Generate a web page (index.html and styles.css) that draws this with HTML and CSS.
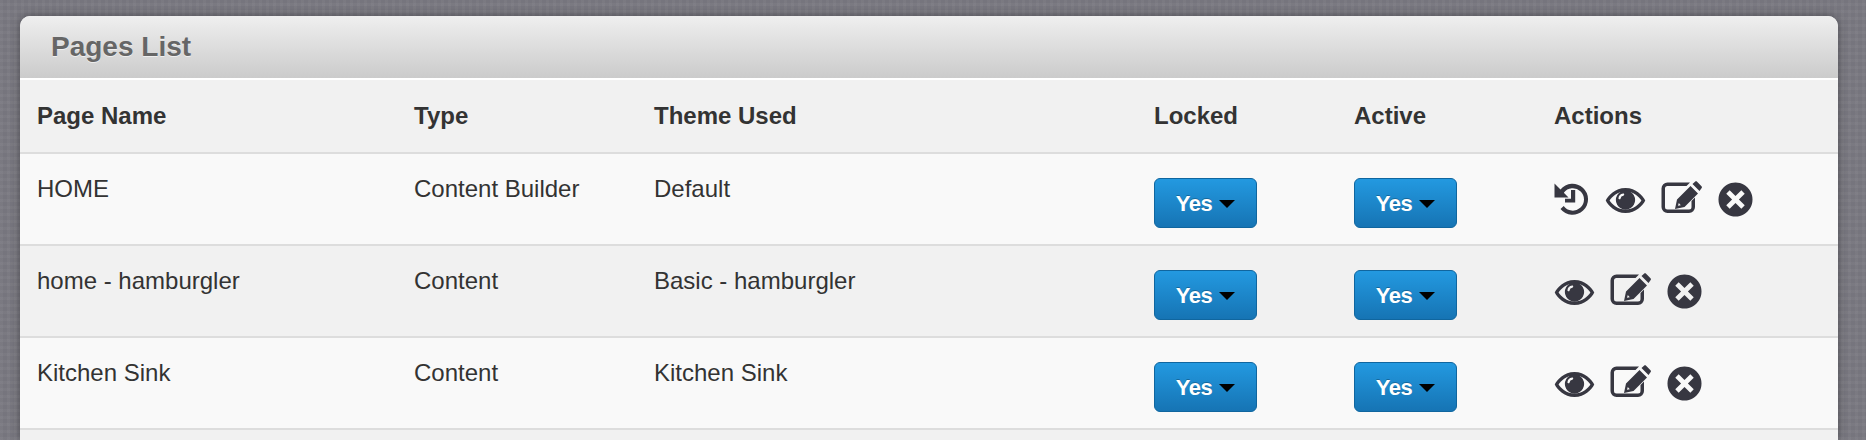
FILE: index.html
```html
<!DOCTYPE html>
<html lang="en">
<head>
  <meta charset="UTF-8">
  <title>Pages List</title>
  <link rel="stylesheet" href="styles.css">
</head>
<body>
  <svg class="icon-defs" width="0" height="0">
    <defs>
      <symbol id="ico-history" viewBox="0 0 36 36">
        <path d="M6.500 8.500A15.500 15.500 0 1 1 6.500 28l3.200-3A11.200 11.200 0 1 0 9.800 11.800L14.500 16.500H.5V2.500z"/>
        <path d="M17 9h4.200v12.500H11v-3.800h6z"/>
      </symbol>
      <symbol id="ico-eye" viewBox="0 0 42 28">
        <path fill-rule="evenodd" d="M21 1C32 1 39 9 41.500 14 39 19 32 27 21 27S3 19 .5 14C3 9 10 1 21 1zM21 4.600C13 4.600 7 10 4.500 14 7 18 13 23.400 21 23.400S35 18 37.500 14C35 10 29 4.600 21 4.600z"/>
        <path fill-rule="evenodd" d="M21 3.500a10 10 0 1 1-.01 0zM18.500 6.800a5.500 5.500 0 0 0-4.800 4.800c0 1.500 2 1.500 2.200.2A3.400 3.400 0 0 1 18.700 9c1.400-.2 1.300-2.300-.2-2.200z"/>
      </symbol>
      <symbol id="ico-edit" viewBox="0 0 42 34">
        <path d="M6.500 1.500H29l-3.500 3.500H6.500A2.500 2.500 0 0 0 4 7.500v18.500A2.500 2.500 0 0 0 6.500 28.500h21.500a2.500 2.500 0 0 0 2.500-2.500V20l3.500-3.500V26A6 6 0 0 1 28 32h-21.500A6 6 0 0 1 .5 26V7.500A6 6 0 0 1 6.500 1.500z"/>
        <path fill-rule="evenodd" d="M16 18.500 29.500 5 37 12.500 23.500 26 14 28zM17.800 22 17 24.800 19.800 24.200z"/>
        <path d="M31.500 3 34 .8c.7-.6 1.500-.6 2.100 0l4.400 4.400c.6.6.6 1.500 0 2.100L38.500 10z"/>
      </symbol>
      <symbol id="ico-close" viewBox="0 0 36 36">
        <path fill-rule="evenodd" d="M18 .5a17.500 17.500 0 1 1-.01 0zM12 8.500 8.500 12 14.500 18 8.500 24 12 27.500 18 21.500 24 27.500 27.500 24 21.500 18 27.500 12 24 8.500 18 14.500z"/>
      </symbol>
    </defs>
  </svg>

  <div class="panel">
    <div class="panel-head">
      <h2>Pages List</h2>
    </div>
    <table class="pages">
      <colgroup>
        <col class="col-name">
        <col class="col-type">
        <col class="col-theme">
        <col class="col-flag">
        <col class="col-flag">
        <col>
      </colgroup>
      <thead>
        <tr>
          <th>Page Name</th>
          <th>Type</th>
          <th>Theme Used</th>
          <th>Locked</th>
          <th>Active</th>
          <th>Actions</th>
        </tr>
      </thead>
      <tbody>
        <tr>
          <td>HOME</td>
          <td>Content Builder</td>
          <td>Default</td>
          <td><button class="btn-yes">Yes<span class="caret"></span></button></td>
          <td><button class="btn-yes">Yes<span class="caret"></span></button></td>
          <td>
            <div class="actions">
              <svg class="ico ico-history"><use href="#ico-history"/></svg>
              <svg class="ico ico-eye"><use href="#ico-eye"/></svg>
              <svg class="ico ico-edit"><use href="#ico-edit"/></svg>
              <svg class="ico ico-close"><use href="#ico-close"/></svg>
            </div>
          </td>
        </tr>
        <tr>
          <td>home - hamburgler</td>
          <td>Content</td>
          <td>Basic - hamburgler</td>
          <td><button class="btn-yes">Yes<span class="caret"></span></button></td>
          <td><button class="btn-yes">Yes<span class="caret"></span></button></td>
          <td>
            <div class="actions">
              <svg class="ico ico-eye"><use href="#ico-eye"/></svg>
              <svg class="ico ico-edit"><use href="#ico-edit"/></svg>
              <svg class="ico ico-close"><use href="#ico-close"/></svg>
            </div>
          </td>
        </tr>
        <tr>
          <td>Kitchen Sink</td>
          <td>Content</td>
          <td>Kitchen Sink</td>
          <td><button class="btn-yes">Yes<span class="caret"></span></button></td>
          <td><button class="btn-yes">Yes<span class="caret"></span></button></td>
          <td>
            <div class="actions">
              <svg class="ico ico-eye"><use href="#ico-eye"/></svg>
              <svg class="ico ico-edit"><use href="#ico-edit"/></svg>
              <svg class="ico ico-close"><use href="#ico-close"/></svg>
            </div>
          </td>
        </tr>
      </tbody>
    </table>
  </div>
</body>
</html>
```

FILE: styles.css
```css
html, body {
  height: 100%;
}
body {
  margin: 0;
  padding: 16px 28px 0 20px;
  box-sizing: border-box;
  overflow: hidden;
  font-family: "Liberation Sans", Arial, sans-serif;
  font-size: 24px;
  color: #333;
  background-color: #7a7982;
  background-image:
    repeating-linear-gradient(0deg, rgba(255,255,255,0.02) 0 3px, rgba(0,0,0,0.02) 3px 7px),
    repeating-linear-gradient(90deg, rgba(255,255,255,0.02) 0 3px, rgba(0,0,0,0.02) 3px 7px);
}
.icon-defs {
  position: absolute;
}
.panel {
  border-radius: 10px 10px 0 0;
  box-shadow: 0 0 10px rgba(0, 0, 0, 0.35);
  background: #f1f1f1;
  height: 424px;
}
.panel-head {
  height: 62px;
  padding-left: 31px;
  border-bottom: 2px solid #fff;
  border-radius: 10px 10px 0 0;
  background: linear-gradient(to bottom, #efefef, #cbcbcb);
}
.panel-head h2 {
  margin: 0;
  font-size: 28px;
  line-height: 62px;
  font-weight: bold;
  color: #666;
  text-shadow: 0 1px 0 rgba(255,255,255,0.6);
}
.pages {
  width: 100%;
  border-collapse: collapse;
  table-layout: fixed;
}
.col-name { width: 378px; }
.col-type { width: 240px; }
.col-theme { width: 500px; }
.col-flag { width: 200px; }
.pages th {
  height: 72px;
  padding: 0 16px;
  text-align: left;
  font-weight: bold;
  background: #f1f1f1;
  border-bottom: 2px solid #ddd;
}
.pages td {
  height: 90px;
  padding: 0 16px;
  vertical-align: top;
  line-height: 30px;
  border-bottom: 2px solid #ddd;
}
.pages td:not(:nth-child(n+4)) {
  padding-top: 20px;
  height: 70px;
}
.pages th:first-child,
.pages td:first-child {
  padding-left: 17px;
}
tbody tr:nth-child(odd) {
  background: #f9f9f9;
}
tbody tr:nth-child(even) {
  background: #f1f1f1;
}
.btn-yes {
  display: flex;
  align-items: center;
  justify-content: center;
  width: 103px;
  height: 50px;
  margin-top: 24px;
  padding: 1px 0 0;
  border: 1px solid #10669f;
  border-radius: 6px;
  background: linear-gradient(to bottom, #2399e0, #1674b4);
  color: #fff;
  font-family: inherit;
  font-size: 22px;
  font-weight: bold;
  letter-spacing: -0.5px;
  text-shadow: 0 -1px 0 rgba(0,0,0,0.25);
}
.caret {
  width: 0;
  height: 0;
  margin-left: 7px;
  border-left: 8px solid transparent;
  border-right: 8px solid transparent;
  border-top: 8px solid #000;
}
.actions {
  display: flex;
  align-items: center;
  gap: 15px;
  height: 90px;
}
.ico {
  display: block;
  fill: #373741;
  flex: none;
}
.ico-history { width: 36px; height: 36px; }
.ico-eye { width: 41px; height: 27px; margin-top: 2px; }
.ico-edit { width: 42px; height: 34px; margin-top: -2px; }
.ico-close { width: 35px; height: 35px; }
```
